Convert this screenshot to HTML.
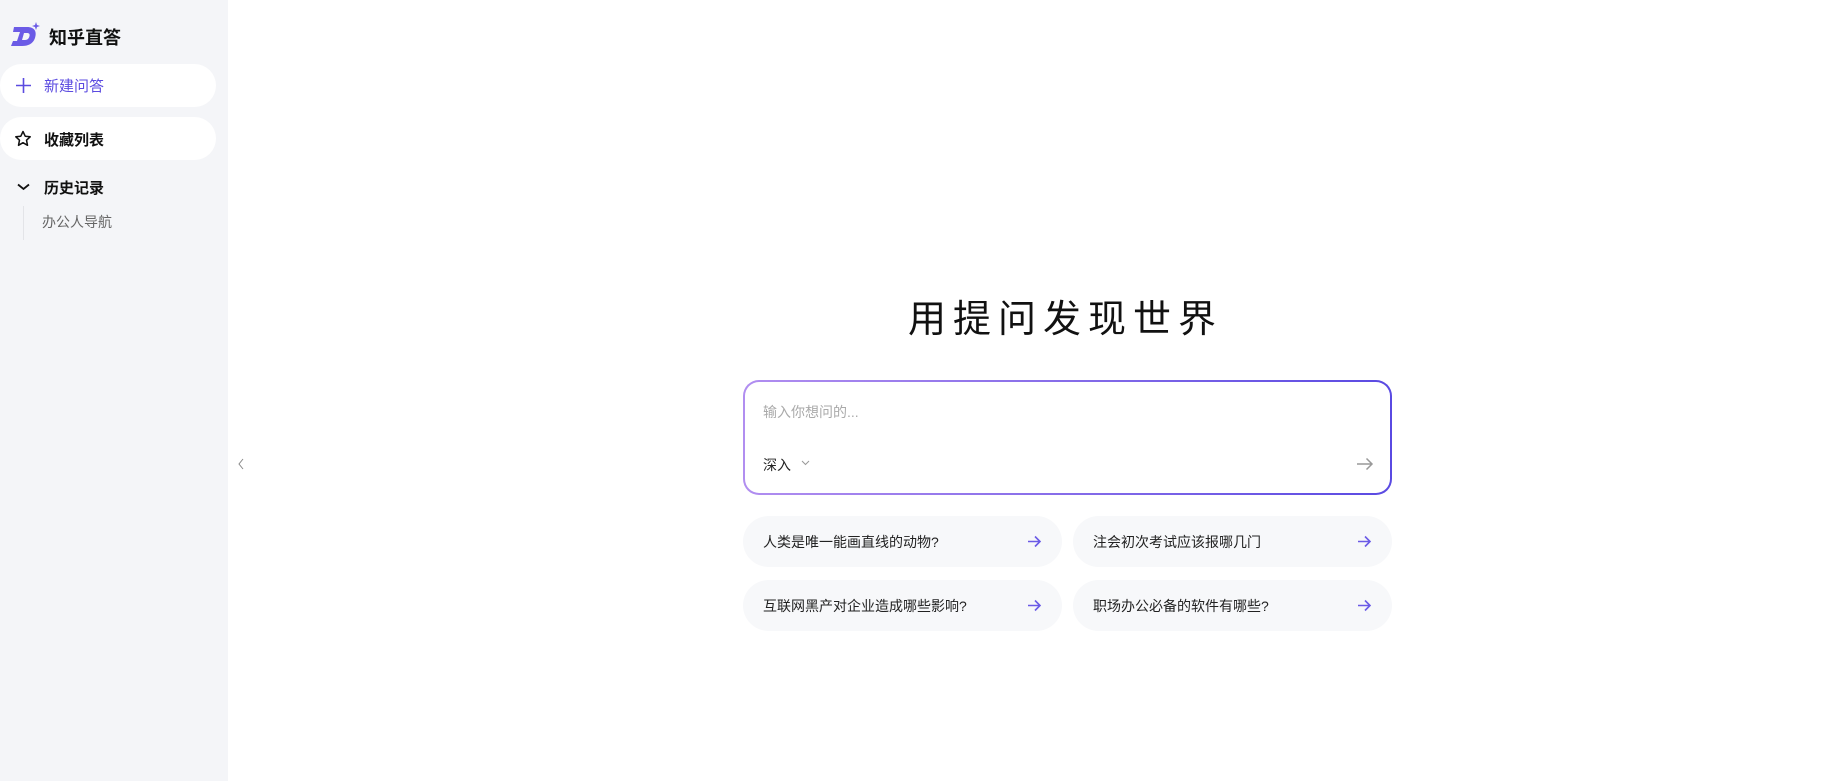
<!DOCTYPE html>
<html><head><meta charset="utf-8"><style>
*{margin:0;padding:0;box-sizing:border-box}
body{width:1827px;height:781px;background:#fff;font-family:"Liberation Sans","Noto Sans CJK SC",sans-serif;position:relative;overflow:hidden}
.side{position:absolute;left:0;top:0;width:228px;height:781px;background:#f4f5f8}
.abs{position:absolute}
.btn{position:absolute;left:0;width:216px;height:43px;background:#fff;border-radius:22px}
.t{position:absolute;white-space:nowrap}
.card{position:absolute;height:51px;width:319px;background:#f7f8fa;border-radius:26px;font-size:14px;color:#222}
.card span{position:absolute;left:20px;top:16px}
.card svg{position:absolute;right:20px;top:19px}
</style></head><body>
<div class="side">
  <svg class="abs" style="left:10px;top:22px" width="30" height="25" viewBox="0 0 30 25">
    <path d="M4 5 H17 C25 5 27 10 25 16 C23 22 18 24 12 24 H1 L3 19 H7 L10 10 H3 Z M14 11 L12 18 H15 C18 18 19 16 19.5 14 C20 12 19 11 17 11 Z" fill="#6b5be6" fill-rule="evenodd"/>
    <path d="M26 0 L27 3 L30 4 L27 5 L26 8 L25 5 L22 4 L25 3 Z" fill="#6b5be6"/>
  </svg>
  <div class="t" style="left:49px;top:24px;font-size:18px;font-weight:bold;color:#111">知乎直答</div>
  <div class="btn" style="top:64px"></div>
  <svg class="abs" style="left:15px;top:77px" width="17" height="17"><path d="M8.5 1V16M1 8.5H16" stroke="#5b4be0" stroke-width="1.6"/></svg>
  <div class="t" style="left:44px;top:75px;font-size:15px;color:#5b4be0">新建问答</div>
  <div class="btn" style="top:117px"></div>
  <svg class="abs" style="left:14px;top:130px" width="18" height="18" viewBox="0 0 18 18"><path d="M9 1.5L11.2 6.2 16.2 6.8 12.5 10.2 13.5 15.3 9 12.7 4.5 15.3 5.5 10.2 1.8 6.8 6.8 6.2Z" fill="none" stroke="#111" stroke-width="1.5" stroke-linejoin="round"/></svg>
  <div class="t" style="left:44px;top:129px;font-size:15px;color:#111;font-weight:bold">收藏列表</div>
  <svg class="abs" style="left:17px;top:183px" width="13" height="8"><path d="M1 1.5L6.5 6 12 1.5" fill="none" stroke="#111" stroke-width="1.8"/></svg>
  <div class="t" style="left:44px;top:177px;font-size:15px;color:#111;font-weight:bold">历史记录</div>
  <div class="abs" style="left:23px;top:206px;width:1px;height:34px;background:#e3e4e8"></div>
  <div class="t" style="left:42px;top:212px;font-size:14px;color:#666">办公人导航</div>
</div>
<svg class="abs" style="left:237px;top:458px" width="8" height="12"><path d="M6 1L2 6 6 11" fill="none" stroke="#888" stroke-width="1"/></svg>
<div class="t" style="left:908px;top:288px;font-size:38px;letter-spacing:7px;color:#111;font-weight:400">用提问发现世界</div>
<div class="abs" style="left:743px;top:380px;width:649px;height:115px;border-radius:16px;padding:2px;background:linear-gradient(90deg,#b18ef0,#5a4ae2)">
  <div style="width:100%;height:100%;background:#fff;border-radius:14px"></div>
</div>
<div class="t" style="left:763px;top:402px;font-size:14px;color:#aaa">输入你想问的...</div>
<div class="t" style="left:763px;top:455px;font-size:14px;color:#222">深入</div>
<svg class="abs" style="left:801px;top:460px" width="9" height="6"><path d="M1 1L4.5 4.5 8 1" fill="none" stroke="#999" stroke-width="1"/></svg>
<svg class="abs" style="left:1356px;top:457px" width="18" height="14"><path d="M1 7H16M10.5 1.5L16 7 10.5 12.5" fill="none" stroke="#999" stroke-width="1.5"/></svg>
<div class="card" style="left:743px;top:516px"><span>人类是唯一能画直线的动物?</span><svg width="15" height="13"><path d="M1 6.5H13M8 1.5L13 6.5 8 11.5" fill="none" stroke="#6b5be6" stroke-width="1.6"/></svg></div>
<div class="card" style="left:1073px;top:516px"><span>注会初次考试应该报哪几门</span><svg width="15" height="13"><path d="M1 6.5H13M8 1.5L13 6.5 8 11.5" fill="none" stroke="#6b5be6" stroke-width="1.6"/></svg></div>
<div class="card" style="left:743px;top:580px"><span>互联网黑产对企业造成哪些影响?</span><svg width="15" height="13"><path d="M1 6.5H13M8 1.5L13 6.5 8 11.5" fill="none" stroke="#6b5be6" stroke-width="1.6"/></svg></div>
<div class="card" style="left:1073px;top:580px"><span>职场办公必备的软件有哪些?</span><svg width="15" height="13"><path d="M1 6.5H13M8 1.5L13 6.5 8 11.5" fill="none" stroke="#6b5be6" stroke-width="1.6"/></svg></div>
</body></html>
